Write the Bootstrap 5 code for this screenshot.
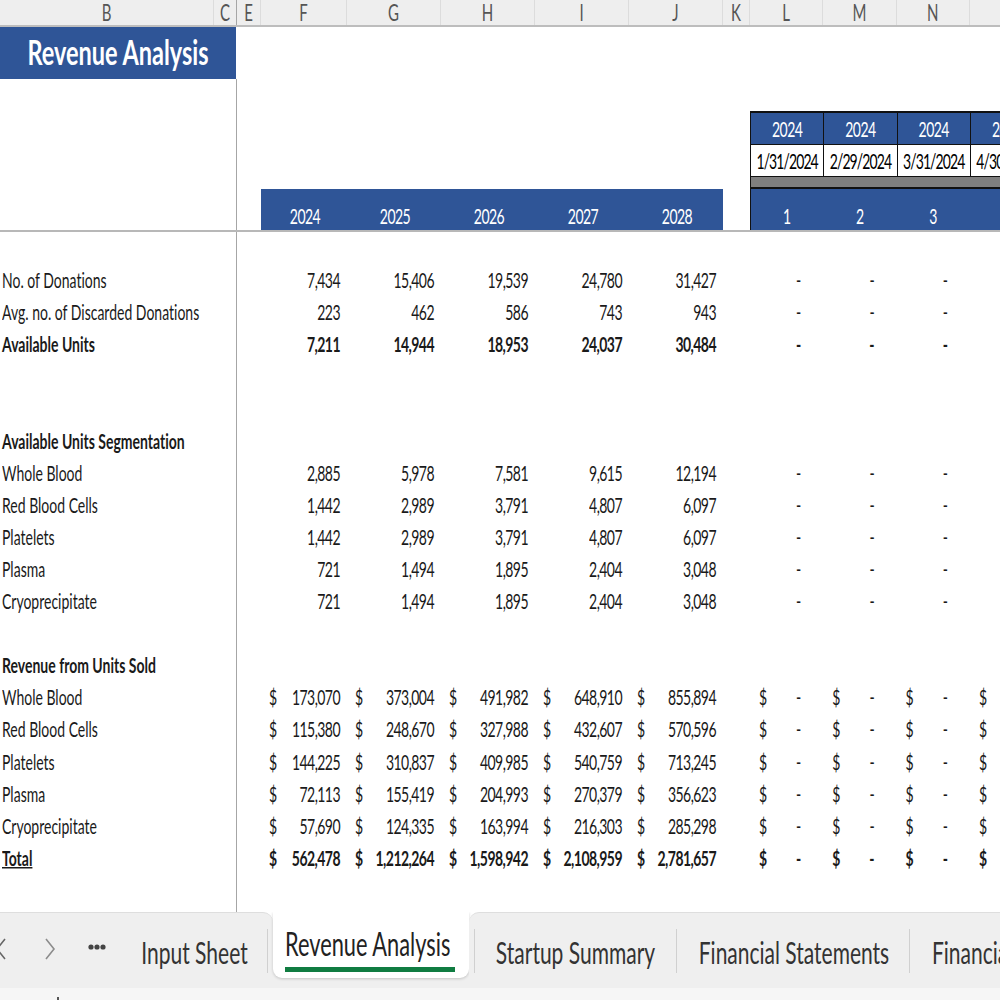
<!DOCTYPE html>
<html lang="en">
<head>
    <meta charset="UTF-8">
    <title>Revenue Analysis</title>
    <link href="https://cdn.jsdelivr.net/npm/bootstrap@5.3.0/dist/css/bootstrap.min.css" rel="stylesheet">
    <style>
        html, body { height: 1000px; overflow: hidden; }
        body {
            width: 1000px;
            background: #fff;
            color: #1a1a1a;
            font-family: "Lato", "Liberation Sans", sans-serif;
            font-size: 14px;
            font-variant-ligatures: none;
        }
        .txt { display: inline-block; transform: scaleY(1.5); white-space: nowrap; line-height: 1; }
        .num { letter-spacing: -0.55px; font-variant-numeric: tabular-nums; }
        .date-num { letter-spacing: -0.9px; font-variant-numeric: tabular-nums; }
        .sheet { height: 912px; overflow: hidden; }
        .sheet-row {
            display: grid;
            grid-template-columns: 214px 23px 24px 86px 94px 94px 94px 94px 27px 73.3px 73.3px 73.3px 73.3px;
            width: 1043px;
            height: 32.1px;
        }
        .sheet-row > div { min-width: 0; display: flex; align-items: center; }
        .pane-edge { border-right: 1px solid #a6a6a6; }
        .letters { height: 27px; background: #eeeeee; border-bottom: 2px solid #bdbdbd; color: #555; font-size: 15px; }
        .letters > div { justify-content: center; border-right: 1px solid #dcdcdc; }
        .letters > .pane-edge { border-right: 1px solid #a6a6a6; }
        .title-row { height: 52px; }
        .title-cell {
            grid-column: 1 / span 2;
            margin-right: 1px;
            background: #2f5597;
            color: #fff;
            justify-content: center;
            font-size: 23.5px;
            font-weight: 700;
        }
        .gap-row { height: 32px; }
        .month-row { height: 34px; }
        .date-row { height: 32px; }
        .grey-row { height: 12px; }
        .year-row { height: 43px; border-bottom: 2px solid #b8b8b8; }
        .blue-cell { background: #2f5597; color: #fff; justify-content: center; }
        .boxed { border: 1px solid #111; border-top-width: 2px; border-right-width: 0; }
        .date-cell { border: 1px solid #111; border-top: 0; border-right-width: 0; justify-content: center; color: #000; }
        .grey-cell { background: #7f7f7f; border-bottom: 2px solid #111; }
        .grey-first { border-left: 1px solid #111; }
        .year-row .blue-cell { align-items: flex-end; padding-bottom: 7px; }
        .year-cell { padding-left: 2px; }
        .edge-dark { border-left: 1px solid #111; }
        .label-cell { padding-left: 2px; }
        .value-cell { justify-content: flex-end; padding-right: 7px; }
        .acct-cell { justify-content: space-between; padding-left: 8px; padding-right: 7px; }
        .dash-cell { justify-content: flex-end; padding-right: 22px; }
        .dash-acct { justify-content: space-between; padding-left: 9px; padding-right: 22px; }
        .strong-row { font-weight: 700; }
        .total-label { text-decoration: underline; }

        .tab-bar { display: flex; height: 76px; background: #fff; overflow: hidden; font-size: 21px; color: #333; }
        .tab-left, .tab-right { background: #efefef; border-top: 1px solid #dedede; display: flex; align-items: center; }
        .tab-left { width: 273px; border-top-right-radius: 10px; }
        .tab-right { flex: 1 1 0; border-top-left-radius: 10px; padding-left: 5px; min-width: 0; }
        .tab-hole { width: 196px; background: #efefef; }
        .tab-active {
            height: 66px;
            background: #fff;
            border-radius: 0 0 9px 9px;
            box-shadow: 0 1px 3px rgba(0, 0, 0, .18);
            padding: 0 12px;
        }
        .tab-active .txt { font-size: 21.8px; color: #222; }
        .tab-line { height: 5px; width: 170px; background: #107c41; }
        .tab-name { height: 44px; margin-top: 1px; display: flex; align-items: center; justify-content: center; flex: none; }
        .tab-sep { border-right: 1px solid #d0d0d0; }
        .tab-first { border-left: 1px solid #d0d0d0; }
        .nav-chevron { margin-bottom: 4px; }
        .nav-dots { margin-bottom: 7px; }
        .foot-bar { height: 12px; background: #f6f6f6; }
        .foot-tick { width: 2px; height: 3px; margin-left: 57px; background: #555; }
    </style>
</head>
<body>
    <div class="sheet" id="sheet"></div>

    <div class="tab-bar">
        <div class="tab-left">
            <svg class="nav-chevron" width="12" height="26" viewBox="0 0 12 26"><path d="M5 3 L-3 13 L5 23" fill="none" stroke="#666" stroke-width="1.6"/></svg>
            <svg class="nav-chevron" width="12" height="26" viewBox="0 0 12 26" style="margin-left:32px"><path d="M2 3 L10 13 L2 23" fill="none" stroke="#8c8c8c" stroke-width="1.6"/></svg>
            <svg class="nav-dots" width="18" height="8" viewBox="0 0 18 8" style="margin-left:32px"><circle cx="3" cy="4" r="2.6" fill="#444"/><circle cx="9" cy="4" r="2.6" fill="#444"/><circle cx="15" cy="4" r="2.6" fill="#444"/></svg>
            <div class="tab-name tab-sep" style="width:162px;padding-left:16px"><span class="txt">Input Sheet</span></div>
        </div>
        <div class="tab-hole">
            <div class="tab-active d-flex flex-column">
                <div class="d-flex align-items-center" style="height:55px;padding-top:9px"><span class="txt">Revenue Analysis</span></div>
                <div class="tab-line"></div>
            </div>
        </div>
        <div class="tab-right">
            <div class="tab-name tab-sep tab-first" style="width:203px"><span class="txt">Startup Summary</span></div>
            <div class="tab-name tab-sep" style="width:233px;padding-left:2px"><span class="txt">Financial Statements</span></div>
            <div class="tab-name justify-content-start" style="padding-left:22px"><span class="txt">Financial</span></div>
        </div>
    </div>
    <div class="foot-bar d-flex align-items-end"><div class="foot-tick"></div></div>

    <script>
        const colLetters = ['B', 'C', 'E', 'F', 'G', 'H', 'I', 'J', 'K', 'L', 'M', 'N', 'O'];

        // label, yearly values, kind: plain / money, bold
        const rows = [
            { gap: 1 },
            { label: 'No. of Donations', vals: ['7,434', '15,406', '19,539', '24,780', '31,427'] },
            { label: 'Avg. no. of Discarded Donations', vals: ['223', '462', '586', '743', '943'] },
            { label: 'Available Units', bold: 1, vals: ['7,211', '14,944', '18,953', '24,037', '30,484'] },
            { gap: 1 }, { gap: 1 },
            { label: 'Available Units Segmentation', bold: 1 },
            { label: 'Whole Blood', vals: ['2,885', '5,978', '7,581', '9,615', '12,194'] },
            { label: 'Red Blood Cells', vals: ['1,442', '2,989', '3,791', '4,807', '6,097'] },
            { label: 'Platelets', vals: ['1,442', '2,989', '3,791', '4,807', '6,097'] },
            { label: 'Plasma', vals: ['721', '1,494', '1,895', '2,404', '3,048'] },
            { label: 'Cryoprecipitate', vals: ['721', '1,494', '1,895', '2,404', '3,048'] },
            { gap: 1 },
            { label: 'Revenue from Units Sold', bold: 1 },
            { label: 'Whole Blood', money: 1, vals: ['173,070', '373,004', '491,982', '648,910', '855,894'] },
            { label: 'Red Blood Cells', money: 1, vals: ['115,380', '248,670', '327,988', '432,607', '570,596'] },
            { label: 'Platelets', money: 1, vals: ['144,225', '310,837', '409,985', '540,759', '713,245'] },
            { label: 'Plasma', money: 1, vals: ['72,113', '155,419', '204,993', '270,379', '356,623'] },
            { label: 'Cryoprecipitate', money: 1, vals: ['57,690', '124,335', '163,994', '216,303', '285,298'] },
            { label: 'Total', money: 1, bold: 1, total: 1, vals: ['562,478', '1,212,264', '1,598,942', '2,108,959', '2,781,657'] },
            { gap: 1 }, { gap: 1 }
        ];

        const span = (t, cls = '') => `<span class="txt ${cls}">${t}</span>`;
        const empty = (n) => '<div></div>'.repeat(n);

        function letterRow() {
            return `<div class="sheet-row letters">` + colLetters.map((c, i) =>
                `<div class="${i === 1 ? 'pane-edge' : ''}">${span(c)}</div>`).join('') + `</div>`;
        }

        function headRows() {
            const months = ['2024', '2024', '2024', '2024'];
            const dates = ['1/31/2024', '2/29/2024', '3/31/2024', '4/30/2024'];
            const years = ['2024', '2025', '2026', '2027', '2028'];
            const idx = ['1', '2', '3', '4'];
            const left = `<div></div><div class="pane-edge"></div>`;
            let h = `<div class="sheet-row title-row"><div class="title-cell">${span('Revenue Analysis')}</div></div>`;
            h += `<div class="sheet-row gap-row">${left}</div>`;
            h += `<div class="sheet-row month-row">${left}${empty(7)}` +
                months.map(m => `<div class="blue-cell boxed">${span(m, 'num')}</div>`).join('') + `</div>`;
            h += `<div class="sheet-row date-row">${left}${empty(7)}` +
                dates.map(d => `<div class="date-cell">${span(d, 'date-num')}</div>`).join('') + `</div>`;
            h += `<div class="sheet-row grey-row">${left}${empty(7)}` +
                [0, 1, 2, 3].map(i => `<div class="grey-cell ${i === 0 ? 'grey-first' : ''}"></div>`).join('') + `</div>`;
            h += `<div class="sheet-row year-row">${left}<div></div>` +
                years.map(y => `<div class="blue-cell year-cell">${span(y, 'num')}</div>`).join('') + `<div></div>` +
                idx.map((n, i) => `<div class="blue-cell ${i === 0 ? 'edge-dark' : ''}">${span(n)}</div>`).join('') + `</div>`;
            return h;
        }

        function dataRow(r) {
            if (r.gap) return `<div class="sheet-row"><div></div><div class="pane-edge"></div></div>`;
            let h = `<div class="sheet-row ${r.bold ? 'strong-row' : ''}">`;
            h += `<div class="label-cell">${span(r.label, r.total ? 'total-label' : '')}</div><div class="pane-edge"></div><div></div>`;
            if (r.vals) {
                h += r.vals.map(v => r.money
                    ? `<div class="acct-cell">${span('$')}${span(v, 'num')}</div>`
                    : `<div class="value-cell">${span(v, 'num')}</div>`).join('');
                h += `<div></div>`;
                for (let i = 0; i < 4; i++) {
                    h += r.money
                        ? `<div class="dash-acct">${span('$')}${span('-')}</div>`
                        : `<div class="dash-cell">${span('-')}</div>`;
                }
            }
            return h + `</div>`;
        }

        document.getElementById('sheet').innerHTML = letterRow() + headRows() + rows.map(dataRow).join('');
    </script>
    <script src="https://cdn.jsdelivr.net/npm/bootstrap@5.3.0/dist/js/bootstrap.bundle.min.js"></script>
</body>
</html>
